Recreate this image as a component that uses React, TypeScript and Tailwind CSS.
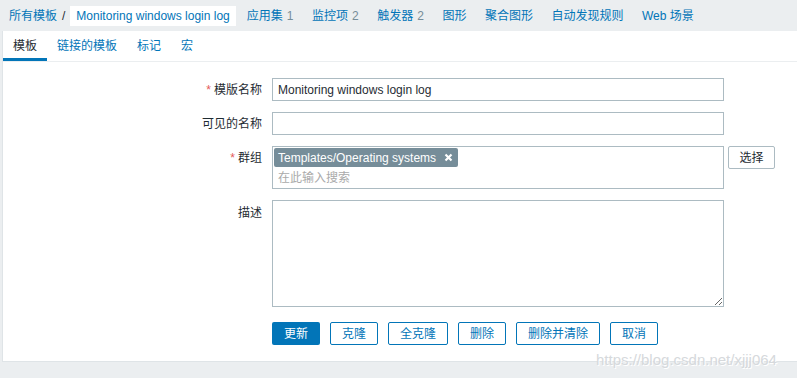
import React from 'react';

const font = { fontFamily: '"Liberation Sans", Arial, "Noto Sans CJK SC", sans-serif' };

const navItems: { label: string; count?: string }[] = [
  { label: '应用集', count: '1' },
  { label: '监控项', count: '2' },
  { label: '触发器', count: '2' },
  { label: '图形' },
  { label: '聚合图形' },
  { label: '自动发现规则' },
  { label: 'Web 场景' },
];

const tabs = ['模板', '链接的模板', '标记', '宏'];

const actions = ['克隆', '全克隆', '删除', '删除并清除', '取消'];

function Label({ text, required }: { text: string; required?: boolean }) {
  return (
    <div className="flex h-[23px] items-center justify-end text-[12px] text-[#1f2c33]">
      {required && <span className="mr-[3px] text-[#e45959]">*</span>}
      {text}
    </div>
  );
}

export default function App() {
  return (
    <div className="h-[378px] w-full overflow-hidden bg-[#ebeef0] text-[12px]" style={font}>
      <nav className="flex h-[31px] items-center pl-[9px]">
        <a className="text-[#0275b8]">所有模板</a>
        <span className="mx-[5px] text-[#1f2c33]">/</span>
        <span className="flex h-[20px] items-center bg-white px-[6px] text-[#0275b8]">
          Monitoring windows login log
        </span>
        <div className="ml-[11px] flex gap-[18.5px]">
          {navItems.map((item) => (
            <a key={item.label} className="text-[#0275b8]">
              {item.label}
              {item.count && <span className="ml-[4px] text-[#768d99]">{item.count}</span>}
            </a>
          ))}
        </div>
      </nav>

      <div className="relative ml-[2px] h-[331px] border-b border-l border-[#dfe4e7] bg-white">
        <div className="flex h-[31px] border-b border-[#ebeef0]">
          {tabs.map((tab, i) => (
            <div
              key={tab}
              className={
                i === 0
                  ? 'flex items-center border-b-[3px] border-[#0275b8] px-[10px] pt-[3px] text-[#1f2c33]'
                  : 'flex items-center px-[10px] text-[#0275b8]'
              }
            >
              {tab}
            </div>
          ))}
        </div>

        <div className="grid grid-cols-[259px_452px_auto] gap-x-[10px] gap-y-[11px] pt-[16px]">
          <Label text="模版名称" required />
          <div className="flex h-[23px] items-center border border-[#acbbc2] px-[5px] text-[#1f2c33]">
            Monitoring windows login log
          </div>
          <div />

          <Label text="可见的名称" />
          <div className="h-[23px] border border-[#acbbc2]" />
          <div />

          <Label text="群组" required />
          <div className="h-[43px] border border-[#acbbc2] px-[1px] pt-[1px]">
            <span className="inline-flex h-[19px] items-center gap-[8px] rounded-[2px] bg-[#768d99] pl-[4px] pr-[5px] text-white">
              Templates/Operating systems
              <svg width="9" height="9" viewBox="0 0 9 9">
                <path d="M1.5 1.5 L7.5 7.5 M7.5 1.5 L1.5 7.5" stroke="white" strokeWidth="2.2" />
              </svg>
            </span>
            <div className="pl-[4px] pt-[2px] text-[#aaaaaa]">在此输入搜索</div>
          </div>
          <div className="-ml-[6px] self-start">
            <button className="h-[23px] w-[47px] rounded-[2px] border border-[#acbbc2] bg-white text-[#1f2c33]">
              选择
            </button>
          </div>

          <div className="flex h-[23px] items-start justify-end pt-[4px] text-[#1f2c33]">描述</div>
          <textarea className="h-[107px] resize border border-[#acbbc2] outline-none" />
          <div />

          <div />
          <div className="mt-[4px] flex gap-[10px]">
            <button className="h-[23px] rounded-[2px] bg-[#0275b8] px-[12px] text-white">更新</button>
            {actions.map((a) => (
              <button
                key={a}
                className="h-[23px] rounded-[2px] border border-[#0275b8] bg-white px-[11px] text-[#0275b8]"
              >
                {a}
              </button>
            ))}
          </div>
          <div />
        </div>
      </div>

      <div
        className="pointer-events-none absolute left-[596px] top-[349px] text-[15px] text-[#d6d9dc]"
        style={{ textShadow: '1px 1px 0 #ffffff' }}
      >
        https://blog.csdn.net/xjjj064
      </div>
    </div>
  );
}
